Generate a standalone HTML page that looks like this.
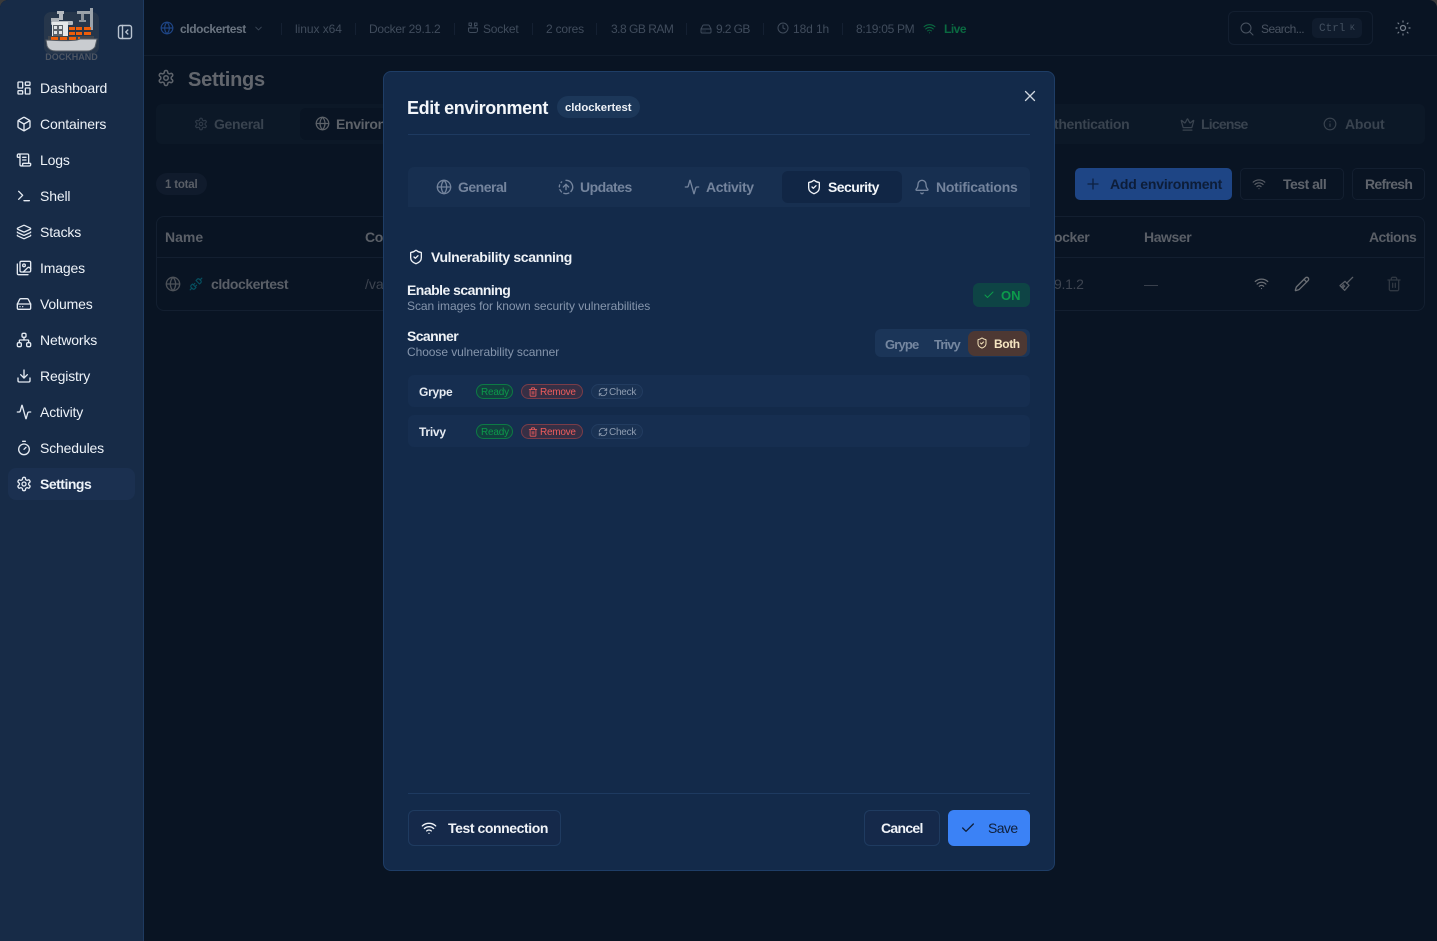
<!DOCTYPE html>
<html><head><meta charset="utf-8"><style>
*{box-sizing:border-box}
html,body{margin:0;padding:0;width:1437px;height:941px;overflow:hidden;background:#3a3a3a;font-family:"Liberation Sans",sans-serif}
#app{position:absolute;left:0;top:0;width:1437px;height:941px;background:#091423;border-radius:8px 8px 0 0;overflow:hidden}
.a{position:absolute}
.t{position:absolute;white-space:nowrap;line-height:1}
svg.i{position:absolute;fill:none;stroke:currentColor;stroke-width:2;stroke-linecap:round;stroke-linejoin:round;overflow:visible}
.nav{font-size:14px;color:#eef3f9;left:40px;letter-spacing:-.15px}
.navi{left:16px;width:16px;height:16px;color:#e4eaf2}
.top{font-size:12px;color:#404c5c;top:23px;letter-spacing:-.2px}
.sep{position:absolute;width:1px;height:12px;top:23px;background:#142032}
.tab{font-size:14px;color:#333e4d;top:117px;font-weight:bold;letter-spacing:-.33px}
.mt{font-size:14px;font-weight:bold;color:#74849d;top:180px;letter-spacing:-.36px}
.b{font-size:14px;font-weight:bold;letter-spacing:-.42px}
.pill{position:absolute;height:15px;border-radius:8px;border:1px solid}
.s{font-size:10px;line-height:1;letter-spacing:-.1px}
</style></head><body>
<svg width="0" height="0" style="position:absolute"><defs>
<symbol id="dash" viewBox="0 0 24 24"><rect x="3" y="3" width="7" height="9" rx="1"/><rect x="14" y="3" width="7" height="5" rx="1"/><rect x="14" y="12" width="7" height="9" rx="1"/><rect x="3" y="16" width="7" height="5" rx="1"/></symbol>
<symbol id="box" viewBox="0 0 24 24"><path d="M21 8a2 2 0 0 0-1-1.73l-7-4a2 2 0 0 0-2 0l-7 4A2 2 0 0 0 3 8v8a2 2 0 0 0 1 1.73l7 4a2 2 0 0 0 2 0l7-4A2 2 0 0 0 21 16Z"/><path d="m3.3 7 8.7 5 8.7-5"/><path d="M12 22V12"/></symbol>
<symbol id="scroll" viewBox="0 0 24 24"><path d="M15 12h-5"/><path d="M15 8h-5"/><path d="M19 17V5a2 2 0 0 0-2-2H4"/><path d="M8 21h12a2 2 0 0 0 2-2v-1a1 1 0 0 0-1-1H11a1 1 0 0 0-1 1v1a2 2 0 1 1-4 0V5a2 2 0 1 0-4 0v2a1 1 0 0 0 1 1h3"/></symbol>
<symbol id="term" viewBox="0 0 24 24"><path d="m4 17 6-6-6-6"/><path d="M12 19h8"/></symbol>
<symbol id="layers" viewBox="0 0 24 24"><path d="M12.83 2.18a2 2 0 0 0-1.66 0L2.6 6.08a1 1 0 0 0 0 1.83l8.58 3.91a2 2 0 0 0 1.66 0l8.58-3.9a1 1 0 0 0 0-1.83z"/><path d="M2 12a1 1 0 0 0 .58.91l8.6 3.91a2 2 0 0 0 1.65 0l8.58-3.9A1 1 0 0 0 22 12"/><path d="M2 17a1 1 0 0 0 .58.91l8.6 3.91a2 2 0 0 0 1.65 0l8.58-3.9A1 1 0 0 0 22 17"/></symbol>
<symbol id="images" viewBox="0 0 24 24"><path d="M18 22H4a2 2 0 0 1-2-2V6"/><path d="m22 13-1.296-1.296a2.41 2.41 0 0 0-3.408 0L11 18"/><circle cx="12" cy="8" r="2"/><rect x="6" y="2" width="16" height="16" rx="2"/></symbol>
<symbol id="drive" viewBox="0 0 24 24"><path d="M22 12H2"/><path d="M5.45 5.11 2 12v6a2 2 0 0 0 2 2h16a2 2 0 0 0 2-2v-6l-3.45-6.89A2 2 0 0 0 16.76 4H7.24a2 2 0 0 0-1.79 1.11z"/><path d="M6 16h.01"/><path d="M10 16h.01"/></symbol>
<symbol id="net" viewBox="0 0 24 24"><rect x="16" y="16" width="6" height="6" rx="2"/><rect x="2" y="16" width="6" height="6" rx="2"/><rect x="9" y="2" width="6" height="6" rx="2"/><path d="M5 16v-3a1 1 0 0 1 1-1h12a1 1 0 0 1 1 1v3"/><path d="M12 12V8"/></symbol>
<symbol id="down" viewBox="0 0 24 24"><path d="M21 15v4a2 2 0 0 1-2 2H5a2 2 0 0 1-2-2v-4"/><path d="m7 10 5 5 5-5"/><path d="M12 15V3"/></symbol>
<symbol id="act" viewBox="0 0 24 24"><path d="M22 12h-2.48a2 2 0 0 0-1.93 1.46l-2.35 8.36a.25.25 0 0 1-.48 0L9.24 2.18a.25.25 0 0 0-.48 0l-2.35 8.36A2 2 0 0 1 4.49 12H2"/></symbol>
<symbol id="timer" viewBox="0 0 24 24"><path d="M10 2h4"/><path d="m12 14 3-3"/><circle cx="12" cy="14" r="8"/></symbol>
<symbol id="gear" viewBox="0 0 24 24"><path d="M12.22 2h-.44a2 2 0 0 0-2 2v.18a2 2 0 0 1-1 1.73l-.43.25a2 2 0 0 1-2 0l-.15-.08a2 2 0 0 0-2.73.73l-.22.38a2 2 0 0 0 .73 2.73l.15.1a2 2 0 0 1 1 1.72v.51a2 2 0 0 1-1 1.74l-.15.09a2 2 0 0 0-.73 2.73l.22.38a2 2 0 0 0 2.73.73l.15-.08a2 2 0 0 1 2 0l.43.25a2 2 0 0 1 1 1.73V20a2 2 0 0 0 2 2h.44a2 2 0 0 0 2-2v-.18a2 2 0 0 1 1-1.73l.43-.25a2 2 0 0 1 2 0l.15.08a2 2 0 0 0 2.73-.73l.22-.39a2 2 0 0 0-.73-2.73l-.15-.08a2 2 0 0 1-1-1.74v-.5a2 2 0 0 1 1-1.74l.15-.09a2 2 0 0 0 .73-2.73l-.22-.38a2 2 0 0 0-2.73-.73l-.15.08a2 2 0 0 1-2 0l-.43-.25a2 2 0 0 1-1-1.73V4a2 2 0 0 0-2-2z"/><circle cx="12" cy="12" r="3"/></symbol>
<symbol id="globe" viewBox="0 0 24 24"><circle cx="12" cy="12" r="10"/><path d="M12 2a14.5 14.5 0 0 0 0 20 14.5 14.5 0 0 0 0-20"/><path d="M2 12h20"/></symbol>
<symbol id="wifi" viewBox="0 0 24 24"><path d="M12 20h.01"/><path d="M2 8.82a15 15 0 0 1 20 0"/><path d="M5 12.859a10 10 0 0 1 14 0"/><path d="M8.5 16.429a5 5 0 0 1 7 0"/></symbol>
<symbol id="shield" viewBox="0 0 24 24"><path d="M20 13c0 5-3.5 7.5-7.66 8.95a1 1 0 0 1-.67-.01C7.5 20.5 4 18 4 13V6a1 1 0 0 1 1-1c2 0 4.5-1.2 6.24-2.72a1.17 1.17 0 0 1 1.52 0C14.51 3.81 17 5 19 5a1 1 0 0 1 1 1z"/><path d="m9 12 2 2 4-4"/></symbol>
<symbol id="bell" viewBox="0 0 24 24"><path d="M10.268 21a2 2 0 0 0 3.464 0"/><path d="M3.262 15.326A1 1 0 0 0 4 17h16a1 1 0 0 0 .74-1.673C19.41 13.956 18 12.499 18 8A6 6 0 0 0 6 8c0 4.499-1.411 5.956-2.738 7.326"/></symbol>
<symbol id="fade" viewBox="0 0 24 24"><path d="M12 2a10 10 0 0 1 7.38 16.75"/><path d="m16 12-4-4-4 4"/><path d="M12 16V8"/><path d="M2.5 8.875a10 10 0 0 0-.5 3"/><path d="M2.83 16a10 10 0 0 0 2.43 3.4"/><path d="M4.636 5.235a10 10 0 0 1 .891-.857"/><path d="M8.644 21.42a10 10 0 0 0 7.631-.38"/></symbol>
<symbol id="crown" viewBox="0 0 24 24"><path d="M11.562 3.266a.5.5 0 0 1 .876 0L15.39 8.87a1 1 0 0 0 1.516.294L21.183 5.5a.5.5 0 0 1 .798.519l-2.834 10.246a1 1 0 0 1-.956.734H5.81a1 1 0 0 1-.957-.734L2.02 6.02a.5.5 0 0 1 .798-.519l4.276 3.664a1 1 0 0 0 1.516-.294z"/><path d="M5 21h14"/></symbol>
<symbol id="info" viewBox="0 0 24 24"><circle cx="12" cy="12" r="10"/><path d="M12 16v-4"/><path d="M12 8h.01"/></symbol>
<symbol id="pencil" viewBox="0 0 24 24"><path d="M21.174 6.812a1 1 0 0 0-3.986-3.987L3.842 16.174a2 2 0 0 0-.5.83l-1.321 4.352a.5.5 0 0 0 .623.622l4.353-1.32a2 2 0 0 0 .83-.497z"/><path d="m15 5 4 4"/></symbol>
<symbol id="broom" viewBox="0 0 24 24"><path d="M22 2 13 11"/><path d="M3 14.5 10.5 8l6 6L10 21.5 3 14.5z"/><path d="m7 18 3-3"/><path d="m5.5 16.2 3-3"/></symbol>
<symbol id="trash" viewBox="0 0 24 24"><path d="M3 6h18"/><path d="M19 6v14c0 1-1 2-2 2H7c-1 0-2-1-2-2V6"/><path d="M8 6V4c0-1 1-2 2-2h4c1 0 2 1 2 2v2"/><path d="M10 11v6"/><path d="M14 11v6"/></symbol>
<symbol id="ref" viewBox="0 0 24 24"><path d="M3 12a9 9 0 0 1 9-9 9.75 9.75 0 0 1 6.74 2.74L21 8"/><path d="M21 3v5h-5"/><path d="M21 12a9 9 0 0 1-9 9 9.75 9.75 0 0 1-6.74-2.74L3 16"/><path d="M8 16H3v5"/></symbol>
<symbol id="check" viewBox="0 0 24 24"><path d="M20 6 9 17l-5-5"/></symbol>
<symbol id="plug" viewBox="0 0 24 24"><path d="m19 5 3-3"/><path d="m2 22 3-3"/><path d="M6.3 20.3a2.4 2.4 0 0 0 3.4 0L12 18l-6-6-2.3 2.3a2.4 2.4 0 0 0 0 3.4Z"/><path d="M7.5 13.5 10 11"/><path d="M10.5 16.5 13 14"/><path d="m12 6 6 6 2.3-2.3a2.4 2.4 0 0 0 0-3.4l-2.6-2.6a2.4 2.4 0 0 0-3.4 0Z"/></symbol>
<symbol id="sock" viewBox="0 0 24 24"><path d="M4 2h5v5H4z"/><path d="M15 2h5v5h-5z"/><path d="M3 12h18v5a4 4 0 0 1-4 4H7a4 4 0 0 1-4-4z"/><path d="M8 12V7"/><path d="M16 12V7"/></symbol>
</defs></svg>
<div id="app">

<!-- top bar -->
<div class="a" style="left:144px;top:55px;width:1293px;height:1px;background:#111d2d"></div>
<svg class="i" style="left:160px;top:21px;width:14px;height:14px;color:#1e4585"><use href="#globe"/></svg>
<div class="t" style="left:180px;top:23px;font-size:12px;font-weight:bold;letter-spacing:-.4px;color:#6a7480">cldockertest</div>
<svg class="i" style="left:253px;top:23px;width:11px;height:11px;color:#3c4858"><path d="m6 9 6 6 6-6" transform="scale(.46)"/></svg>
<div class="sep" style="left:281px"></div>
<div class="t top" style="left:295px;letter-spacing:-.05px">linux x64</div>
<div class="sep" style="left:355px"></div>
<div class="t top" style="left:369px;letter-spacing:-.25px">Docker 29.1.2</div>
<div class="sep" style="left:454px"></div>
<svg class="i" style="left:467px;top:22px;width:12px;height:12px;color:#404c5c"><use href="#sock"/></svg>
<div class="t top" style="left:483px">Socket</div>
<div class="sep" style="left:532px"></div>
<div class="t top" style="left:546px;letter-spacing:-.2px">2 cores</div>
<div class="sep" style="left:596px"></div>
<div class="t top" style="left:611px;letter-spacing:-.5px">3.8 GB RAM</div>
<div class="sep" style="left:686px"></div>
<svg class="i" style="left:700px;top:23px;width:12px;height:12px;color:#404c5c"><use href="#drive"/></svg>
<div class="t top" style="left:716px;letter-spacing:-.6px">9.2 GB</div>
<div class="sep" style="left:763px"></div>
<svg class="i" style="left:777px;top:22px;width:12px;height:12px;color:#404c5c"><circle cx="6" cy="6" r="5" stroke-width="1"/><path d="M6 3v3l2 1" stroke-width="1"/></svg>
<div class="t top" style="left:793px;letter-spacing:-.1px">18d 1h</div>
<div class="sep" style="left:842px"></div>
<div class="t top" style="left:856px;letter-spacing:-.3px">8:19:05 PM</div>
<svg class="i" style="left:923px;top:22px;width:13px;height:13px;color:#0a6a41"><use href="#wifi"/></svg>
<div class="t top" style="left:944px;color:#0a6a41;font-weight:bold;letter-spacing:-.5px">Live</div>

<div class="a" style="left:1228px;top:11px;width:145px;height:34px;border:1px solid #131f30;border-radius:6px"></div>
<svg class="i" style="left:1240px;top:22px;width:13px;height:13px;color:#4a5462"><circle cx="6" cy="6" r="5" stroke-width="1"/><path d="m13 13-3.5-3.5" stroke-width="1"/></svg>
<div class="t top" style="left:1261px;color:#4a5462;letter-spacing:-.55px">Search...</div>
<div class="a" style="left:1312px;top:18px;width:50px;height:20px;background:#101c2d;border-radius:5px"></div>
<div class="t" style="left:1319px;top:23px;font:11px 'Liberation Mono',monospace;color:#424f5f">Ctrl</div>
<div class="t" style="left:1350px;top:24px;font:8px 'Liberation Mono',monospace;color:#424f5f">K</div>
<svg class="i" style="left:1396px;top:21px;width:14px;height:14px;color:#77808c"><circle cx="7" cy="7" r="2.5" stroke-width="1.2"/><path stroke-width="1.2" d="M7 0v1M7 13v1M0 7h1M13 7h1M2 2l.7.7M11.3 11.3l.7.7M2 12l.7-.7M11.3 2.7l.7-.7"/></svg>

<!-- page -->
<svg class="i" style="left:157px;top:69px;width:18px;height:18px;color:#5f646c"><use href="#gear"/></svg>
<div class="t" style="left:188px;top:70px;font-size:20px;font-weight:bold;letter-spacing:-.25px;color:#62666d">Settings</div>
<div class="a" style="left:156px;top:104px;width:1269px;height:40px;background:#0c1827;border-radius:6px"></div>
<div class="a" style="left:300px;top:108px;width:120px;height:32px;background:#091423;border-radius:6px"></div>
<svg class="i" style="left:194px;top:117px;width:14px;height:14px;color:#2f3a48"><use href="#gear"/></svg>
<div class="t tab" style="left:214px;color:#39434f">General</div>
<svg class="i" style="left:315px;top:116px;width:15px;height:15px;color:#5d6269"><use href="#globe"/></svg>
<div class="t tab" style="left:336px;color:#5d6269">Environments</div>
<div class="t tab" style="left:1054px;color:#39434f">thentication</div>
<svg class="i" style="left:1180px;top:117px;width:15px;height:15px;color:#39434f"><use href="#crown"/></svg>
<div class="t tab" style="left:1201px;color:#39434f;letter-spacing:-.8px">License</div>
<svg class="i" style="left:1323px;top:117px;width:14px;height:14px;color:#39434f"><use href="#info"/></svg>
<div class="t tab" style="left:1345px;color:#39434f;letter-spacing:-.2px">About</div>

<div class="a" style="left:156px;top:173px;width:51px;height:22px;background:#101b2c;border-radius:11px"></div>
<div class="t" style="left:165px;top:180px;font-size:11.5px;font-weight:bold;letter-spacing:-.2px;color:#5a5f67">1 total</div>

<div class="a" style="left:1075px;top:168px;width:157px;height:32px;background:#1e4585;border-radius:5px"></div>
<svg class="i" style="left:1087px;top:178px;width:12px;height:12px;color:#0d2040"><path d="M6 1v10M1 6h10" stroke-width="1.3"/></svg>
<div class="t b" style="left:1110px;top:177px;letter-spacing:-.2px;color:#0d1d38">Add environment</div>
<div class="a" style="left:1240px;top:168px;width:104px;height:32px;border:1px solid #131f30;border-radius:5px"></div>
<svg class="i" style="left:1252px;top:177px;width:14px;height:14px;color:#5a5f67"><use href="#wifi"/></svg>
<div class="t b" style="left:1283px;top:177px;letter-spacing:-.5px;color:#5f646c">Test all</div>
<div class="a" style="left:1352px;top:168px;width:73px;height:32px;border:1px solid #131f30;border-radius:5px"></div>
<div class="t b" style="left:1365px;top:177px;letter-spacing:-.7px;color:#5f646c">Refresh</div>

<div class="a" style="left:156px;top:216px;width:1269px;height:95px;border:1px solid #131f30;border-radius:8px"></div>
<div class="a" style="left:157px;top:257px;width:1267px;height:1px;background:#131f30"></div>
<div class="t b" style="left:165px;top:230px;letter-spacing:0;color:#5a5f67">Name</div>
<div class="t b" style="left:365px;top:230px;color:#5a5f67">Connection</div>
<div class="t b" style="left:1054px;top:230px;color:#5a5f67">ocker</div>
<div class="t b" style="left:1144px;top:230px;color:#5a5f67">Hawser</div>
<div class="t b" style="left:1369px;top:230px;letter-spacing:-.6px;color:#5a5f67">Actions</div>
<svg class="i" style="left:165px;top:276px;width:16px;height:16px;color:#4d5259"><use href="#globe"/></svg>
<svg class="i" style="left:189px;top:277px;width:14px;height:14px;color:#064f5f"><use href="#plug"/></svg>
<div class="t b" style="left:211px;top:277px;letter-spacing:-.45px;color:#5a5f67">cldockertest</div>
<div class="t" style="left:365px;top:277px;font-size:14px;color:#3d4450">/var/run/docker.sock</div>
<div class="t" style="left:1054px;top:277px;font-size:14px;letter-spacing:-.3px;color:#3d4450">9.1.2</div>
<div class="t" style="left:1144px;top:277px;font-size:14px;color:#3d4450">—</div>
<svg class="i" style="left:1254px;top:276px;width:15px;height:15px;color:#6a6e74"><use href="#wifi"/></svg>
<svg class="i" style="left:1294px;top:276px;width:16px;height:16px;color:#6a6e74"><use href="#pencil"/></svg>
<svg class="i" style="left:1338px;top:276px;width:16px;height:16px;color:#5a5f67"><use href="#broom"/></svg>
<svg class="i" style="left:1386px;top:276px;width:16px;height:16px;color:#2f3742"><use href="#trash"/></svg>

<!-- sidebar -->
<div class="a" style="left:0;top:0;width:144px;height:941px;background:#172b47;border-right:1px solid #1e3a60"></div>
<svg class="a" style="left:43px;top:7px" width="58" height="56" viewBox="0 0 58 56">
<rect x="1" y="5" width="55" height="42" rx="7" fill="#4a4f55" opacity=".3"/>
<rect x="14" y="4" width="7" height="3" fill="#b5bac0"/><rect x="16" y="7" width="4" height="6" fill="#b5bac0"/><rect x="8" y="11" width="8" height="3" fill="#aeb3b9"/>
<rect x="8" y="14" width="22" height="4" rx="1" fill="#b5bac0"/>
<rect x="34" y="4" width="13" height="3" fill="#9ca3aa"/><rect x="38" y="7" width="3" height="7" fill="#8c939b"/><rect x="36" y="13" width="7" height="2" fill="#8c939b"/><rect x="47" y="1" width="3" height="22" fill="#9ca3aa"/>
<rect x="9" y="15" width="16" height="16" fill="#e6e8ea"/>
<rect x="10" y="18" width="10" height="11" fill="#5c636b"/><rect x="11" y="19" width="3" height="3" fill="#dfe2e6"/><rect x="16" y="19" width="3" height="3" fill="#dfe2e6"/><rect x="11" y="24" width="3" height="3" fill="#dfe2e6"/><rect x="16" y="24" width="3" height="3" fill="#dfe2e6"/>
<g fill="#ee5e0a"><rect x="26" y="20" width="6" height="3"/><rect x="33" y="20" width="6" height="3"/><rect x="41" y="20" width="7" height="3"/><rect x="26" y="25" width="6" height="3"/><rect x="33" y="25" width="6" height="3"/><rect x="41" y="25" width="7" height="3"/></g>
<rect x="5" y="29" width="46" height="4" fill="#3f454d"/>
<g fill="#ee5e0a"><rect x="8" y="30" width="7" height="3"/><rect x="17" y="30" width="7" height="3"/><rect x="26" y="30" width="7" height="3"/><rect x="35" y="30" width="2" height="3"/></g>
<path d="M3 33C20 34 34 34 37 32H54L52 40Q49 44 44 44H13Q6 44 4 39Z" fill="#c9ccd0" stroke="#565c64" stroke-width="1"/>
<text x="28.5" y="53" text-anchor="middle" font-family="Liberation Sans" font-weight="bold" font-size="9" fill="#4e5663">DOCKHAND</text>
</svg>
<svg class="i" style="left:118px;top:25px;width:14px;height:14px;color:#b9c3d0"><rect x="0.5" y="0.5" width="13" height="13" rx="2" stroke-width="1.4"/><path d="M4.5 .5v13" stroke-width="1.4"/><path d="M9.8 5 7.8 7l2 2" stroke-width="1.4"/></svg>
<svg class="i navi" style="top:80px"><use href="#dash"/></svg><div class="t nav" style="top:81px">Dashboard</div>
<svg class="i navi" style="top:116px"><use href="#box"/></svg><div class="t nav" style="top:117px">Containers</div>
<svg class="i navi" style="top:152px"><use href="#scroll"/></svg><div class="t nav" style="top:153px">Logs</div>
<svg class="i navi" style="top:188px"><use href="#term"/></svg><div class="t nav" style="top:189px">Shell</div>
<svg class="i navi" style="top:224px"><use href="#layers"/></svg><div class="t nav" style="top:225px">Stacks</div>
<svg class="i navi" style="top:260px"><use href="#images"/></svg><div class="t nav" style="top:261px">Images</div>
<svg class="i navi" style="top:296px"><use href="#drive"/></svg><div class="t nav" style="top:297px">Volumes</div>
<svg class="i navi" style="top:332px"><use href="#net"/></svg><div class="t nav" style="top:333px">Networks</div>
<svg class="i navi" style="top:368px"><use href="#down"/></svg><div class="t nav" style="top:369px">Registry</div>
<svg class="i navi" style="top:404px"><use href="#act"/></svg><div class="t nav" style="top:405px">Activity</div>
<svg class="i navi" style="top:440px"><use href="#timer"/></svg><div class="t nav" style="top:441px">Schedules</div>
<div class="a" style="left:8px;top:468px;width:127px;height:32px;background:#1b3050;border-radius:8px"></div>
<svg class="i navi" style="top:476px"><use href="#gear"/></svg><div class="t nav" style="top:477px;font-weight:bold;letter-spacing:-.5px">Settings</div>

<!-- modal -->
<div class="a" style="left:383px;top:71px;width:672px;height:800px;background:#132a4a;border:1px solid #1e3d66;border-radius:8px"></div>
<div class="t" style="left:407px;top:99px;font-size:18px;font-weight:bold;letter-spacing:-.38px;color:#f3f6fa">Edit environment</div>
<div class="a" style="left:557px;top:96px;width:83px;height:22px;background:#1c3759;border-radius:11px"></div>
<div class="t" style="left:565px;top:103px;font-size:11.3px;font-weight:bold;color:#eef2f7">cldockertest</div>
<svg class="i" style="left:1025px;top:91px;width:10px;height:10px;color:#cfd6df"><path d="M.5.5l9 9M9.5.5l-9 9" stroke-width="1.3"/></svg>
<div class="a" style="left:408px;top:134px;width:622px;height:1px;background:#1e3a60"></div>

<div class="a" style="left:408px;top:167px;width:622px;height:40px;background:#172f50;border-radius:6px 6px 0 0"></div>
<div class="a" style="left:782px;top:171px;width:120px;height:32px;background:#112645;border-radius:6px"></div>
<svg class="i" style="left:436px;top:179px;width:16px;height:16px;color:#74849d"><use href="#globe"/></svg>
<div class="t mt" style="left:458px;letter-spacing:-.5px">General</div>
<svg class="i" style="left:558px;top:179px;width:16px;height:16px;color:#74849d"><use href="#fade"/></svg>
<div class="t mt" style="left:580px;letter-spacing:-.5px">Updates</div>
<svg class="i" style="left:684px;top:179px;width:16px;height:16px;color:#74849d"><use href="#act"/></svg>
<div class="t mt" style="left:706px">Activity</div>
<svg class="i" style="left:806px;top:179px;width:16px;height:16px;color:#f0f3f8"><use href="#shield"/></svg>
<div class="t mt" style="left:828px;color:#f3f6fa;letter-spacing:-.55px">Security</div>
<svg class="i" style="left:914px;top:179px;width:16px;height:16px;color:#74849d"><use href="#bell"/></svg>
<div class="t mt" style="left:936px;letter-spacing:-.25px">Notifications</div>

<svg class="i" style="left:408px;top:249px;width:16px;height:16px;color:#eef2f7"><use href="#shield"/></svg>
<div class="t b" style="left:431px;top:250px;letter-spacing:-.36px;color:#eef2f7">Vulnerability scanning</div>
<div class="t b" style="left:407px;top:283px;letter-spacing:-.53px;color:#eef2f7">Enable scanning</div>
<div class="t" style="left:407px;top:300px;font-size:12px;letter-spacing:-.05px;color:#8595ac">Scan images for known security vulnerabilities</div>
<div class="t b" style="left:407px;top:329px;letter-spacing:-.6px;color:#eef2f7">Scanner</div>
<div class="t" style="left:407px;top:346px;font-size:12px;letter-spacing:-.07px;color:#8595ac">Choose vulnerability scanner</div>

<div class="a" style="left:973px;top:283px;width:57px;height:24px;background:#0e4445;border-radius:6px"></div>
<svg class="i" style="left:983px;top:289px;width:12px;height:12px;color:#0c9a4b"><use href="#check"/></svg>
<div class="t" style="left:1001px;top:289px;font-size:13px;font-weight:bold;color:#0c9a4b">ON</div>

<div class="a" style="left:875px;top:329px;width:155px;height:28px;background:#1b3558;border-radius:6px"></div>
<div class="a" style="left:968px;top:331px;width:59px;height:25px;background:#4d3833;border-radius:7px"></div>
<div class="t" style="left:885px;top:338px;font-size:13px;font-weight:bold;letter-spacing:-.85px;color:#7587a0">Grype</div>
<div class="t" style="left:934px;top:338px;font-size:13px;font-weight:bold;letter-spacing:-.9px;color:#7587a0">Trivy</div>
<svg class="i" style="left:976px;top:337px;width:12px;height:12px;color:#f4e3bb"><use href="#shield"/></svg>
<div class="t" style="left:994px;top:338px;font-size:12px;font-weight:bold;letter-spacing:-.4px;color:#f6e6c2">Both</div>

<div class="a" style="left:408px;top:375px;width:622px;height:32px;background:#162e50;border-radius:6px"></div>
<div class="t" style="left:419px;top:386px;font-size:12px;font-weight:bold;letter-spacing:-.25px;color:#e6ebf2">Grype</div>
<div class="pill" style="left:476px;top:384px;width:37px;background:#123f3f;border-color:#0d7a45"></div>
<div class="t s" style="left:481px;top:388px;color:#0c9a4b;letter-spacing:-.2px">Ready</div>
<div class="pill" style="left:521px;top:384px;width:62px;background:#362f45;border-color:#7a3c48"></div>
<svg class="i" style="left:528px;top:387px;width:10px;height:10px;color:#ee5c5c"><use href="#trash"/></svg>
<div class="t s" style="left:540px;top:388px;color:#ee5c5c;letter-spacing:-.25px">Remove</div>
<div class="pill" style="left:591px;top:384px;width:52px;background:#1a3253;border-color:#223c60"></div>
<svg class="i" style="left:598px;top:387px;width:10px;height:10px;color:#8f9db1"><use href="#ref"/></svg>
<div class="t s" style="left:609px;top:388px;color:#8f9db1;letter-spacing:-.25px">Check</div>

<div class="a" style="left:408px;top:415px;width:622px;height:32px;background:#162e50;border-radius:6px"></div>
<div class="t" style="left:419px;top:426px;font-size:12px;font-weight:bold;letter-spacing:-.25px;color:#e6ebf2">Trivy</div>
<div class="pill" style="left:476px;top:424px;width:37px;background:#123f3f;border-color:#0d7a45"></div>
<div class="t s" style="left:481px;top:428px;color:#0c9a4b;letter-spacing:-.2px">Ready</div>
<div class="pill" style="left:521px;top:424px;width:62px;background:#362f45;border-color:#7a3c48"></div>
<svg class="i" style="left:528px;top:427px;width:10px;height:10px;color:#ee5c5c"><use href="#trash"/></svg>
<div class="t s" style="left:540px;top:428px;color:#ee5c5c;letter-spacing:-.25px">Remove</div>
<div class="pill" style="left:591px;top:424px;width:52px;background:#1a3253;border-color:#223c60"></div>
<svg class="i" style="left:598px;top:427px;width:10px;height:10px;color:#8f9db1"><use href="#ref"/></svg>
<div class="t s" style="left:609px;top:428px;color:#8f9db1;letter-spacing:-.25px">Check</div>

<div class="a" style="left:408px;top:793px;width:622px;height:1px;background:#1e3a60"></div>
<div class="a" style="left:408px;top:810px;width:153px;height:36px;background:#15294a;border:1px solid #1f3b60;border-radius:6px"></div>
<svg class="i" style="left:421px;top:820px;width:16px;height:16px;color:#eef2f7"><use href="#wifi"/></svg>
<div class="t b" style="left:448px;top:821px;color:#f0f3f8">Test connection</div>
<div class="a" style="left:864px;top:810px;width:76px;height:36px;background:#15294a;border:1px solid #1f3b60;border-radius:6px"></div>
<div class="t b" style="left:881px;top:821px;letter-spacing:-.7px;color:#f0f3f8">Cancel</div>
<div class="a" style="left:948px;top:810px;width:82px;height:36px;background:#3b82f6;border-radius:6px"></div>
<svg class="i" style="left:960px;top:820px;width:16px;height:16px;color:#0f1f3a"><use href="#check"/></svg>
<div class="t" style="left:988px;top:821px;font-size:14px;letter-spacing:-.6px;color:#0f1f3a">Save</div>
</div>
</body></html>
